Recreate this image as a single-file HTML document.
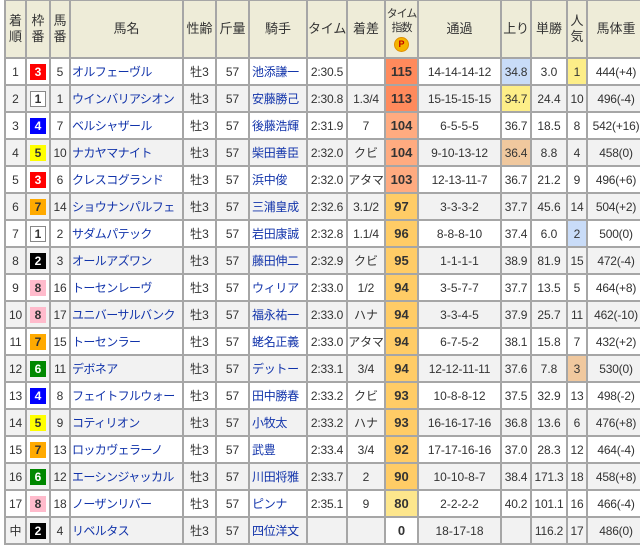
<!DOCTYPE html>
<html><head><meta charset="utf-8"><style>
body{margin:0;background:#fff;width:640px;height:548px;overflow:hidden}
table{position:absolute;left:4px;top:-1px;border-collapse:collapse;table-layout:fixed;width:640px;font-family:"Liberation Sans","Noto Sans CJK JP",sans-serif;font-size:12px;color:#333}
td,th{border:2px solid #a6a6a6;padding:0;text-align:center;white-space:nowrap;overflow:hidden;height:25px;line-height:14px}
th{background:#eeecd8;font-weight:normal;font-size:13px;height:56px;line-height:16px}
tr:nth-child(odd) td{background:#f2f2f2}
td.n{text-align:left;color:#1133aa;padding-left:1px;letter-spacing:-0.6px;font-size:12px}
td.j{text-align:left;color:#1133aa;padding-left:2px;letter-spacing:-0.3px}
.w{display:inline-block;width:16px;height:16px;line-height:16px;font-weight:bold;font-size:12px;vertical-align:middle}
.w1{background:#fff;border:1px solid #888;width:14px;height:14px;line-height:14px;color:#333}
.w2{background:#000;color:#fff}.w3{background:#f00;color:#fff}.w4{background:#00f;color:#fff}
.w5{background:#ff0;color:#333}.w6{background:#080;color:#fff}.w7{background:#fa0;color:#333}.w8{background:#fbc;color:#333}
td.i{font-weight:bold;font-size:13px}
tr td.a{background:#ff8a5c!important}tr td.b{background:#ffab80!important}tr td.c{background:#ffcc66!important}tr td.d{background:#fde68c!important}tr td.e{background:#fff!important}
tr td.p1{background:#c9dcf8!important}tr td.p2{background:#fdee88!important}tr td.p3{background:#f0c89e!important}
.pi{display:inline-block;width:13px;height:13px;border-radius:50%;background:#f5b400;border:1px solid #e09000;color:#c00000;font-weight:bold;font-size:9px;line-height:13px;margin-top:2px;letter-spacing:0}
.sm{letter-spacing:-0.2px}
</style></head><body>
<table>
<colgroup><col style="width:21px"><col style="width:24px"><col style="width:20px"><col style="width:113px"><col style="width:33px"><col style="width:33px"><col style="width:58px"><col style="width:40px"><col style="width:38px"><col style="width:33px"><col style="width:83px"><col style="width:30px"><col style="width:36px"><col style="width:20px"><col style="width:58px"></colgroup>
<tr><th>着<br>順</th><th>枠<br>番</th><th>馬<br>番</th><th>馬名</th><th>性齢</th><th>斤量</th><th>騎手</th><th class="sm">タイム</th><th>着差</th><th style="font-size:11px;line-height:14px;letter-spacing:-1px">タイム<br>指数<br><span class="pi">P</span></th><th>通過</th><th class="sm">上り</th><th>単勝</th><th>人<br>気</th><th>馬体重</th></tr>
<tr><td>1</td><td><span class="w w3">3</span></td><td>5</td><td class="n">オルフェーヴル</td><td>牡3</td><td>57</td><td class="j">池添謙一</td><td class="sm">2:30.5</td><td></td><td class="i a">115</td><td class="sm">14-14-14-12</td><td class="p1 sm">34.8</td><td>3.0</td><td class="p2">1</td><td class="sm">444(+4)</td></tr>
<tr><td>2</td><td><span class="w w1">1</span></td><td>1</td><td class="n">ウインバリアシオン</td><td>牡3</td><td>57</td><td class="j">安藤勝己</td><td class="sm">2:30.8</td><td class="sm">1.3/4</td><td class="i a">113</td><td class="sm">15-15-15-15</td><td class="p2 sm">34.7</td><td>24.4</td><td class="sm">10</td><td class="sm">496(-4)</td></tr>
<tr><td>3</td><td><span class="w w4">4</span></td><td>7</td><td class="n">ベルシャザール</td><td>牡3</td><td>57</td><td class="j">後藤浩輝</td><td class="sm">2:31.9</td><td>7</td><td class="i b">104</td><td>6-5-5-5</td><td class="sm">36.7</td><td>18.5</td><td>8</td><td class="sm">542(+16)</td></tr>
<tr><td>4</td><td><span class="w w5">5</span></td><td class="sm">10</td><td class="n">ナカヤマナイト</td><td>牡3</td><td>57</td><td class="j">柴田善臣</td><td class="sm">2:32.0</td><td>クビ</td><td class="i b">104</td><td class="sm">9-10-13-12</td><td class="p3 sm">36.4</td><td>8.8</td><td>4</td><td class="sm">458(0)</td></tr>
<tr><td>5</td><td><span class="w w3">3</span></td><td>6</td><td class="n">クレスコグランド</td><td>牡3</td><td>57</td><td class="j">浜中俊</td><td class="sm">2:32.0</td><td class="sm">アタマ</td><td class="i b">103</td><td class="sm">12-13-11-7</td><td class="sm">36.7</td><td>21.2</td><td>9</td><td class="sm">496(+6)</td></tr>
<tr><td>6</td><td><span class="w w7">7</span></td><td class="sm">14</td><td class="n">ショウナンパルフェ</td><td>牡3</td><td>57</td><td class="j">三浦皇成</td><td class="sm">2:32.6</td><td class="sm">3.1/2</td><td class="i c">97</td><td>3-3-3-2</td><td class="sm">37.7</td><td>45.6</td><td class="sm">14</td><td class="sm">504(+2)</td></tr>
<tr><td>7</td><td><span class="w w1">1</span></td><td>2</td><td class="n">サダムパテック</td><td>牡3</td><td>57</td><td class="j">岩田康誠</td><td class="sm">2:32.8</td><td class="sm">1.1/4</td><td class="i c">96</td><td>8-8-8-10</td><td class="sm">37.4</td><td>6.0</td><td class="p1">2</td><td class="sm">500(0)</td></tr>
<tr><td>8</td><td><span class="w w2">2</span></td><td>3</td><td class="n">オールアズワン</td><td>牡3</td><td>57</td><td class="j">藤田伸二</td><td class="sm">2:32.9</td><td>クビ</td><td class="i c">95</td><td>1-1-1-1</td><td class="sm">38.9</td><td>81.9</td><td class="sm">15</td><td class="sm">472(-4)</td></tr>
<tr><td>9</td><td><span class="w w8">8</span></td><td class="sm">16</td><td class="n">トーセンレーヴ</td><td>牡3</td><td>57</td><td class="j">ウィリア</td><td class="sm">2:33.0</td><td>1/2</td><td class="i c">94</td><td>3-5-7-7</td><td class="sm">37.7</td><td>13.5</td><td>5</td><td class="sm">464(+8)</td></tr>
<tr><td class="sm">10</td><td><span class="w w8">8</span></td><td class="sm">17</td><td class="n">ユニバーサルバンク</td><td>牡3</td><td>57</td><td class="j">福永祐一</td><td class="sm">2:33.0</td><td>ハナ</td><td class="i c">94</td><td>3-3-4-5</td><td class="sm">37.9</td><td>25.7</td><td class="sm">11</td><td class="sm">462(-10)</td></tr>
<tr><td class="sm">11</td><td><span class="w w7">7</span></td><td class="sm">15</td><td class="n">トーセンラー</td><td>牡3</td><td>57</td><td class="j">蛯名正義</td><td class="sm">2:33.0</td><td class="sm">アタマ</td><td class="i c">94</td><td>6-7-5-2</td><td class="sm">38.1</td><td>15.8</td><td>7</td><td class="sm">432(+2)</td></tr>
<tr><td class="sm">12</td><td><span class="w w6">6</span></td><td class="sm">11</td><td class="n">デボネア</td><td>牡3</td><td>57</td><td class="j">デットー</td><td class="sm">2:33.1</td><td>3/4</td><td class="i c">94</td><td class="sm">12-12-11-11</td><td class="sm">37.6</td><td>7.8</td><td class="p3">3</td><td class="sm">530(0)</td></tr>
<tr><td class="sm">13</td><td><span class="w w4">4</span></td><td>8</td><td class="n">フェイトフルウォー</td><td>牡3</td><td>57</td><td class="j">田中勝春</td><td class="sm">2:33.2</td><td>クビ</td><td class="i c">93</td><td>10-8-8-12</td><td class="sm">37.5</td><td>32.9</td><td class="sm">13</td><td class="sm">498(-2)</td></tr>
<tr><td class="sm">14</td><td><span class="w w5">5</span></td><td>9</td><td class="n">コティリオン</td><td>牡3</td><td>57</td><td class="j">小牧太</td><td class="sm">2:33.2</td><td>ハナ</td><td class="i c">93</td><td class="sm">16-16-17-16</td><td class="sm">36.8</td><td>13.6</td><td>6</td><td class="sm">476(+8)</td></tr>
<tr><td class="sm">15</td><td><span class="w w7">7</span></td><td class="sm">13</td><td class="n">ロッカヴェラーノ</td><td>牡3</td><td>57</td><td class="j">武豊</td><td class="sm">2:33.4</td><td>3/4</td><td class="i c">92</td><td class="sm">17-17-16-16</td><td class="sm">37.0</td><td>28.3</td><td class="sm">12</td><td class="sm">464(-4)</td></tr>
<tr><td class="sm">16</td><td><span class="w w6">6</span></td><td class="sm">12</td><td class="n">エーシンジャッカル</td><td>牡3</td><td>57</td><td class="j">川田将雅</td><td class="sm">2:33.7</td><td>2</td><td class="i c">90</td><td>10-10-8-7</td><td class="sm">38.4</td><td class="sm">171.3</td><td class="sm">18</td><td class="sm">458(+8)</td></tr>
<tr><td class="sm">17</td><td><span class="w w8">8</span></td><td class="sm">18</td><td class="n">ノーザンリバー</td><td>牡3</td><td>57</td><td class="j">ピンナ</td><td class="sm">2:35.1</td><td>9</td><td class="i d">80</td><td>2-2-2-2</td><td class="sm">40.2</td><td class="sm">101.1</td><td class="sm">16</td><td class="sm">466(-4)</td></tr>
<tr><td>中</td><td><span class="w w2">2</span></td><td>4</td><td class="n">リベルタス</td><td>牡3</td><td>57</td><td class="j">四位洋文</td><td></td><td></td><td class="i e">0</td><td>18-17-18</td><td></td><td class="sm">116.2</td><td class="sm">17</td><td class="sm">486(0)</td></tr>
</table>
</body></html>
